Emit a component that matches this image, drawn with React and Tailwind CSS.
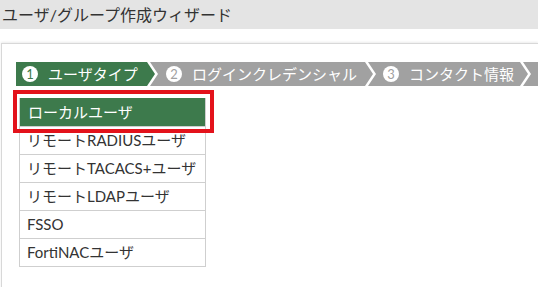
import React from 'react';

const font = { fontFamily: 'Lato, "Noto Sans CJK JP", sans-serif' };

const steps = [
  { n: '1', label: 'ユーザタイプ', active: true, w: 'w-[139px]', pl: 'pl-[6px]' },
  { n: '2', label: 'ログインクレデンシャル', w: 'w-[223px]', pl: 'pl-[16px]' },
  { n: '3', label: 'コンタクト情報', w: 'w-[160px]', pl: 'pl-[15px]' },
  { n: '', label: '', w: 'w-[100px]', pl: 'pl-[15px]' },
];

const types = ['リモートRADIUSユーザ', 'リモートTACACS+ユーザ', 'リモートLDAPユーザ', 'FSSO', 'FortiNACユーザ'];

function Step({ step, first }) {
  const clip = first
    ? '[clip-path:polygon(0_0,calc(100%-8px)_0,100%_50%,calc(100%-8px)_100%,0_100%)]'
    : '[clip-path:polygon(0_0,calc(100%-8px)_0,100%_50%,calc(100%-8px)_100%,0_100%,8px_50%)]';
  return (
    <div
      className={`${clip} ${step.w} ${step.pl} ${first ? '' : '-ml-[5px]'} shrink-0 h-[24px] flex items-center gap-[10px] text-white text-[15px] ${
        step.active ? 'bg-[#3d7a4c]' : 'bg-[#a1a1a1]'
      }`}
    >
      {step.n && (
        <>
          <span
            className={`w-[16px] h-[16px] rounded-full bg-white flex items-center justify-center text-[13px] leading-none ${
              step.active ? 'text-[#3d7a4c]' : 'text-[#a1a1a1]'
            }`}
          >
            {step.n}
          </span>
          <span className="whitespace-nowrap">{step.label}</span>
        </>
      )}
    </div>
  );
}

export default function App() {
  return (
    <div className="w-[538px] h-[287px] overflow-hidden bg-white text-[#333]" style={font}>
      <div className="h-[29px] bg-[#e4e4e4] flex items-center px-[2px] text-[16px]">
        ユーザ/グループ作成ウィザード
      </div>
      <div className="mt-[14px] ml-[1px] h-[250px] border-t border-l border-[#d8d8d8] shadow-[0_-1px_2px_rgba(0,0,0,0.08)]">
        <div className="pt-[18px] pl-[14px] flex overflow-hidden">
          {steps.map((s, i) => (
            <Step key={i} step={s} first={i === 0} />
          ))}
        </div>

        <div className="relative mt-[12px] ml-[17px] w-[187px] border border-t-0 border-[#cfcfcf] text-[15px]">
          <div className="h-[28px] bg-[#3d7a4c] text-white flex items-center pl-[8px]">ローカルユーザ</div>
          {types.map((t) => (
            <div key={t} className="h-[28px] border-t border-[#cfcfcf] flex items-center pl-[7px]">
              {t}
            </div>
          ))}
          <div className="absolute -left-[7px] -top-[8px] w-[201px] h-[43px] border-4 border-[#e3121b]" />
        </div>
      </div>
    </div>
  );
}
